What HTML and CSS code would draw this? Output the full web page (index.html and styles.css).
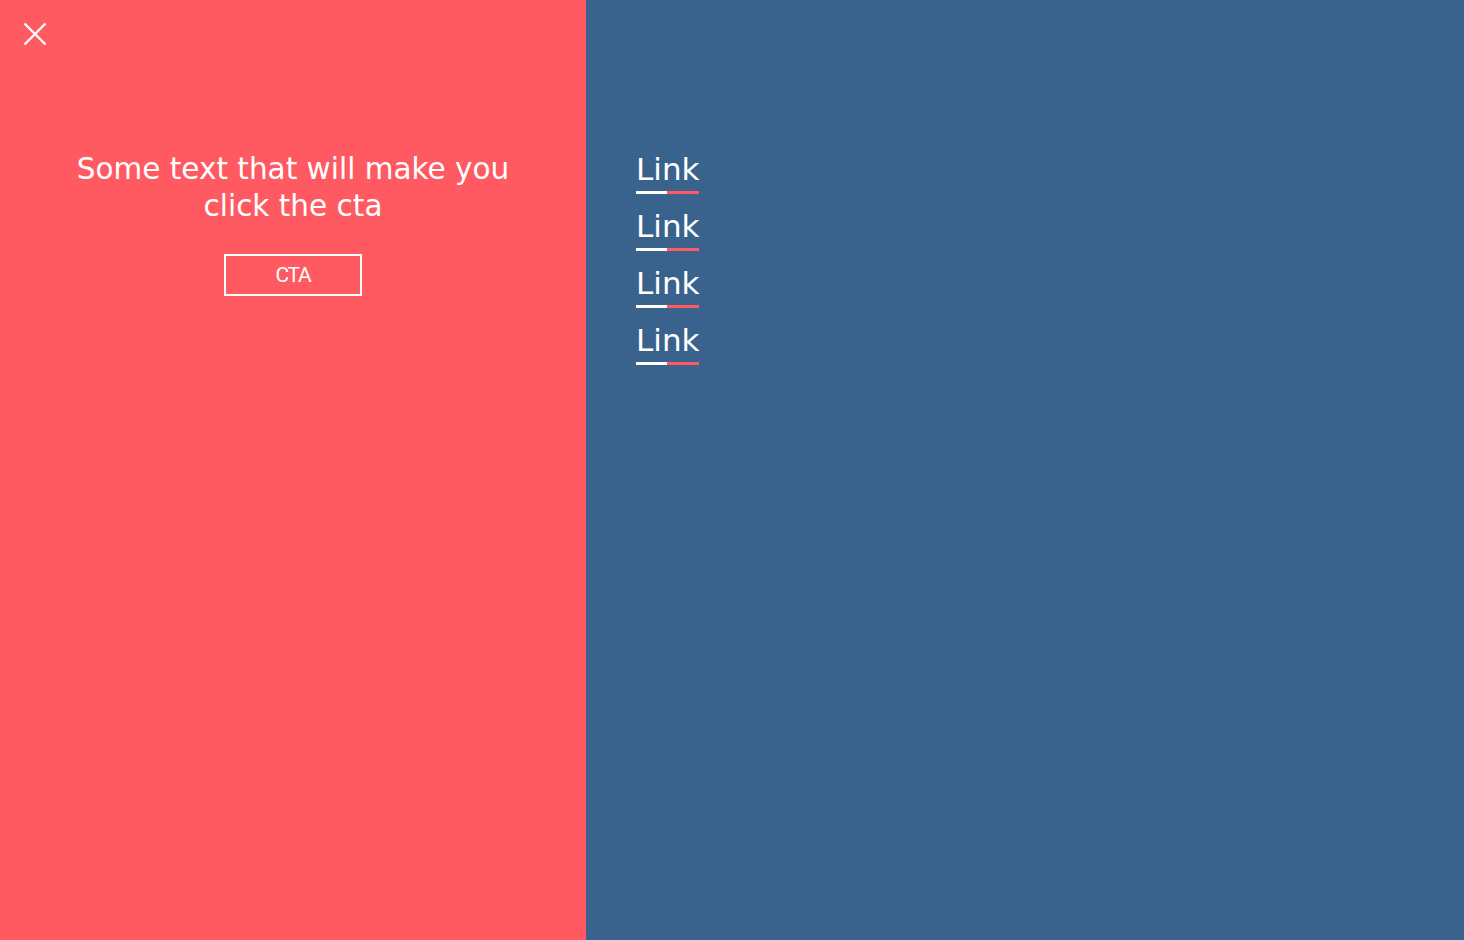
FILE: index.html
```html
<!DOCTYPE html>
<html>
<head>
<meta charset="utf-8">
<link rel="stylesheet" href="styles.css">
</head>
<body>
<div class="page">
  <section class="left">
    <button class="close" aria-label="Close">
      <svg width="24" height="24" viewBox="0 0 24 24"><path d="M1.5 1.5L22.5 22.5M22.5 1.5L1.5 22.5" stroke="#fff" stroke-width="2.4" fill="none"/></svg>
    </button>
    <div class="promo">
      <p class="promo-text">Some text that will make you<br>click the cta</p>
      <a class="cta" href="#">CTA</a>
    </div>
  </section>
  <nav class="right">
    <a class="link" href="#">Link</a>
    <a class="link" href="#">Link</a>
    <a class="link" href="#">Link</a>
    <a class="link" href="#">Link</a>
  </nav>
</div>
</body>
</html>
```
FILE: styles.css
```css
html, body { margin: 0; padding: 0; height: 100%; }
body { font-family: "DejaVu Sans", "Open Sans", sans-serif; color: #fff; }
.page { display: flex; height: 940px; }
.left { width: 586px; background: #ff5a62; position: relative; display: flex; flex-direction: column; align-items: center; }
.close { position: absolute; left: 23px; top: 22px; background: none; border: 0; padding: 0; width: 24px; height: 24px; cursor: pointer; }
.close svg { display: block; }
.promo { margin-top: 151px; display: flex; flex-direction: column; align-items: center; }
.promo-text { margin: 0; font-size: 29.5px; line-height: 37px; font-weight: 400; text-align: center; letter-spacing: 0; }
.cta { margin-top: 29px; display: flex; align-items: center; justify-content: center; width: 134px; height: 38px; border: 2px solid #fff; color: #fff; text-decoration: none; font-family: Roboto, "Liberation Sans", sans-serif; font-weight: 400; font-size: 21px; letter-spacing: -1.3px; }
.right { flex: 1; background: #39628d; display: flex; flex-direction: column; align-items: flex-start; padding: 151px 0 0 50px; gap: 14px; }
.link { color: #fff; text-decoration: none; font-size: 31px; line-height: 36px; font-weight: 400; padding-bottom: 7px; background: linear-gradient(to right, #fff 0 50%, #ff5a62 50% 100%) no-repeat left bottom / 100% 3px; }
```
